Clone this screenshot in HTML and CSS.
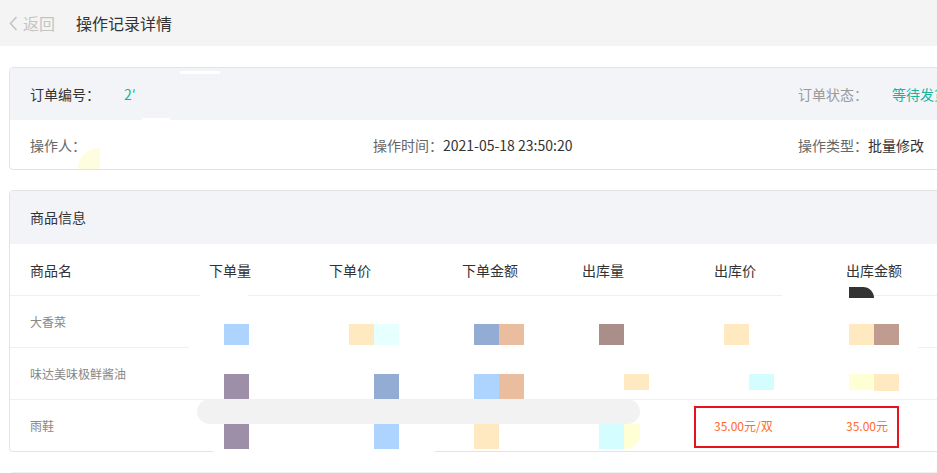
FILE: index.html
```html
<!DOCTYPE html>
<html lang="zh-CN">
<head>
<meta charset="UTF-8" />
<title>操作记录详情</title>
<meta name="viewport" content="width=device-width, initial-scale=1" />
<link rel="stylesheet" href="styles.css">
</head>
<body>

<!-- ---------- TOP BAR ---------- -->
<div class="topbar">
  <a class="back">
    <svg width="9" height="15" viewBox="0 0 9 15"><polyline points="7.5,1 1.5,7.5 7.5,14" fill="none" stroke="#c4c4c4" stroke-width="1.6"/></svg>
    返回
  </a>
  <span class="title">操作记录详情</span>
</div>

<div class="main">
  <!-- ---------- ORDER INFO ---------- -->
  <div class="card">
    <div class="info-row head">
      <div><span class="lbl">订单编号：</span><span class="green">2′</span></div>
      <div></div>
      <div class="status"><span class="lbl">订单状态：</span><span class="green">等待发货</span></div>
    </div>
    <div class="info-row">
      <div><span class="key">操作人：</span></div>
      <div><span class="key">操作时间：</span>2021-05-18 23:50:20</div>
      <div><span class="key">操作类型：</span>批量修改</div>
    </div>
  </div>

  <!-- ---------- GOODS ---------- -->
  <div class="card">
    <div class="card-head">商品信息</div>
    <div class="tr th">
      <div>商品名</div><div>下单量</div><div>下单价</div><div>下单金额</div>
      <div>出库量</div><div>出库价</div><div>出库金额</div>
    </div>
    <div class="tr">
      <div>大香菜</div><div></div><div></div><div></div><div></div><div></div><div></div>
    </div>
    <div class="tr">
      <div>味达美味极鲜酱油</div><div></div><div></div><div></div><div></div><div></div><div></div>
    </div>
    <div class="tr">
      <div>雨鞋</div><div></div><div></div><div></div><div></div>
      <div class="price">35.00元/双</div><div class="price">35.00元</div>
    </div>
  </div>

  <div class="card next"></div>
</div>

<!-- redaction layer + highlight -->
<div class="mosaic" id="mosaic">
  <div class="mark"></div>
</div>

<script>
/* ========= redaction tiles: x, y, w, h, colour, radius ========= */
const tiles=[
  [180,71,40,3,'#fff','2px'],
  [142,118,28,6,'#fff','0 0 14px 14px'],
  [78,148,22,21,'#fffde0','22px 0 0 0'],
  [200,293,48,4,'#fff'],
  [782,293,67,4,'#fff'],
  [849,287,25,11,'#333','0 12px 0 0'],
  [189,345,729,4,'#fff'],
  [213,449,222,4,'#fff'],
  [197,399,443,25,'#f2f2f2','13px'],

  [224,324,25,25,'#acd4ff'],
  [349,324,25,25,'#ffe9c0'],
  [374,324,25,25,'#e6ffff'],
  [474,324,25,25,'#93acd4'],
  [499,324,25,25,'#e9bd9e'],
  [599,324,25,25,'#a98e89'],
  [724,324,25,25,'#ffe9c0'],
  [849,324,25,25,'#ffe9c0'],
  [874,324,25,25,'#bf9c8f'],
  [884,322,15,9,'#fff','0 0 0 8px'],

  [224,374,25,25,'#9e8fa9'],
  [374,374,25,25,'#93acd4'],
  [474,374,25,25,'#acd4ff'],
  [499,374,25,25,'#e9bd9e'],
  [624,374,25,16,'#ffe9c0'],
  [749,374,25,16,'#d3fdff'],
  [849,374,25,16,'#ffffd5'],
  [874,374,25,17,'#ffe9c0'],

  [224,424,25,25,'#9e8fa9'],
  [374,424,25,25,'#acd4ff'],
  [474,424,25,25,'#ffe9c0'],
  [599,424,25,25,'#d3fdff'],
  [624,424,16,25,'#ffffd5','0 0 14px 0']
];
const layer=document.getElementById('mosaic');
tiles.forEach(t=>{
  const d=document.createElement('div');
  d.style.cssText=`left:${t[0]}px;top:${t[1]}px;width:${t[2]}px;height:${t[3]}px;background:${t[4]};border-radius:${t[5]||0}`;
  layer.insertBefore(d,layer.firstChild);
});
</script>
</body>
</html>
```

FILE: styles.css
```css
/* ---- page ---- */
html,body{overflow:hidden}
body{margin:0;position:relative;background:#fff;color:#333;font-size:14px;font-family:"Noto Sans CJK SC","Noto Sans",sans-serif}

/* ---- top bar ---- */
.topbar{height:46px;background:#f4f4f4;display:flex;align-items:center;padding-left:9px;font-size:16px}
.back{display:flex;align-items:center;gap:5px;color:#c4c4c4;margin-right:21px;cursor:pointer}
.title{color:#333}

/* ---- cards ---- */
.main{padding:21px 0 0 9px}
.card{width:945px;box-sizing:border-box;border:1px solid #e3e3e3;border-radius:4px;overflow:hidden}
.card+.card{margin-top:20px}
.card.next{height:20px;border-color:#f0f0f0;border-bottom:0;border-radius:4px 4px 0 0}

.info-row{display:grid;grid-template-columns:343px 425px 1fr;align-items:center;height:49px;padding-left:20px}
.info-row.head{height:52px;background:#f3f4f8}
.info-row.head .lbl{margin-right:24px}
.status .lbl{color:#999}
.green{color:#19b39c}
.key{color:#666}

.card-head{height:53px;line-height:53px;padding-left:20px;background:#f3f4f8}

/* ---- goods table ---- */
.tr{display:grid;grid-template-columns:179px 120px 133px 120px 132px 132px 1fr;align-items:center;height:52px;box-sizing:border-box;border-top:1px solid #efefef;font-size:12px;color:#888}
.tr>div{padding-left:20px;white-space:nowrap}
.tr.th{height:51px;border-top:0;font-size:14px;color:#333}
.price{color:#ff6b2c}

/* ---- overlay ---- */
.mosaic{position:absolute;left:0;top:0;pointer-events:none}
.mosaic div{position:absolute}
.mosaic .mark{left:694px;top:406px;width:205px;height:42px;box-sizing:border-box;border:2px solid #e5141d}
```
